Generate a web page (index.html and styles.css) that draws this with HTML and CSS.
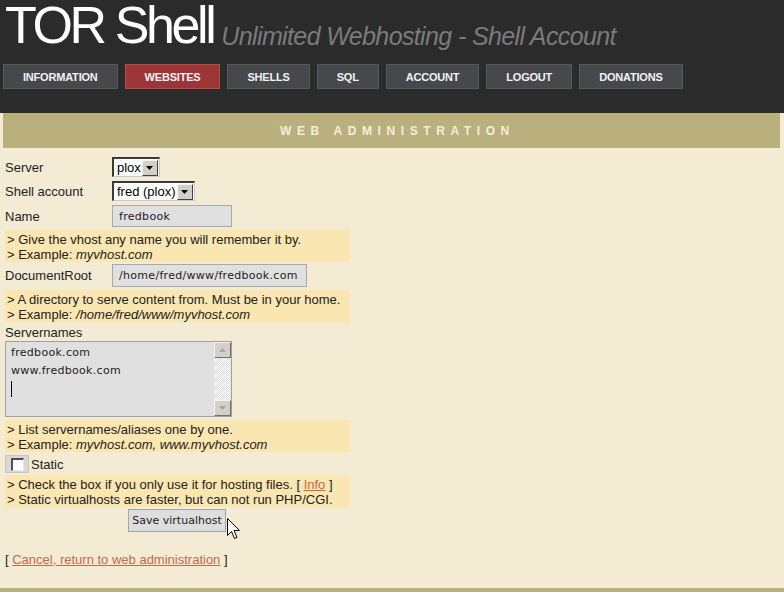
FILE: index.html
```html
<!DOCTYPE html>
<html>
<head>
<meta charset="utf-8">
<title>TOR Shell - Web Administration</title>
<link rel="stylesheet" href="styles.css">
</head>
<body>
<div class="header">
  <div class="brand"><span class="logo">TOR Shell</span><span class="tagline">Unlimited Webhosting - Shell Account</span></div>
  <nav class="nav">
    <a class="navbtn" href="#">INFORMATION</a>
    <a class="navbtn active" href="#">WEBSITES</a>
    <a class="navbtn" href="#">SHELLS</a>
    <a class="navbtn" href="#">SQL</a>
    <a class="navbtn" href="#">ACCOUNT</a>
    <a class="navbtn" href="#">LOGOUT</a>
    <a class="navbtn" href="#">DONATIONS</a>
  </nav>
</div>
<div class="page">
  <div class="titlebar">WEB ADMINISTRATION</div>
  <div class="content">
    <div class="row r-server">
      <span class="label">Server</span>
      <span class="select"><span class="sel-text">plox</span><span class="sel-btn"><svg width="7" height="4" viewBox="0 0 7 4"><path d="M0 0H7L3.5 4Z" fill="#000"/></svg></span></span>
    </div>
    <div class="row r-shell">
      <span class="label">Shell account</span>
      <span class="select"><span class="sel-text">fred (plox)</span><span class="sel-btn"><svg width="7" height="4" viewBox="0 0 7 4"><path d="M0 0H7L3.5 4Z" fill="#000"/></svg></span></span>
    </div>
    <div class="row r-name">
      <span class="label">Name</span>
      <span class="input in-name">fredbook</span>
    </div>
    <div class="help help-a">&gt; Give the vhost any name you will remember it by.<br>&gt; Example: <i>myvhost.com</i></div>
    <div class="row r-doc">
      <span class="label">DocumentRoot</span>
      <span class="input in-doc">/home/fred/www/fredbook.com</span>
    </div>
    <div class="help help-a">&gt; A directory to serve content from. Must be in your home.<br>&gt; Example: <i>/home/fred/www/myvhost.com</i></div>
    <div class="sn-label">Servernames</div>
    <div class="textarea">
      <div class="ta-text">fredbook.com<br>www.fredbook.com<br><span class="caret"></span></div>
      <div class="scrollbar">
        <span class="sb-btn"><svg width="7" height="4" viewBox="0 0 7 4"><path d="M0 4H7L3.5 0Z" fill="#a6a6a6"/></svg></span>
        <span class="sb-track"></span>
        <span class="sb-btn"><svg width="7" height="4" viewBox="0 0 7 4"><path d="M0 0H7L3.5 4Z" fill="#a6a6a6"/></svg></span>
      </div>
    </div>
    <div class="help help-b">&gt; List servernames/aliases one by one.<br>&gt; Example: <i>myvhost.com, www.myvhost.com</i></div>
    <div class="row r-static">
      <span class="cbwrap"><span class="cb"></span></span>
      <span class="static-label">Static</span>
    </div>
    <div class="help help-a">&gt; Check the box if you only use it for hosting files. [ <a class="link" href="#">Info</a> ]<br>&gt; Static virtualhosts are faster, but can not run PHP/CGI.</div>
    <div class="saverow">
      <span class="savebtn">Save virtualhost</span>
      <svg class="cursor" width="13" height="22" viewBox="0 0 13 22"><path d="M0.5 0.5V17.5L4.5 13.5L7.5 20.5L10 19.5L7 12.5H12.5Z" fill="#fff" stroke="#000" stroke-width="1" stroke-linejoin="miter"/></svg>
    </div>
    <div class="cancel">[ <a class="link" href="#">Cancel, return to web administration</a> ]</div>
  </div>
</div>
</body>
</html>
```

FILE: styles.css
```css
* { box-sizing: border-box; }
body {
  margin: 0;
  background: #ffffff;
  font-family: "Liberation Sans", Arial, sans-serif;
}
.header {
  background: #2b2b2b;
  height: 113px;
  padding-left: 3px;
}
.brand {
  height: 50px;
  line-height: 50px;
  white-space: nowrap;
  padding-left: 2px;
}
.logo {
  font-size: 52px;
  letter-spacing: -3.4px;
  color: #ffffff;
}
.tagline {
  font-size: 25px;
  font-style: italic;
  color: #7b7b7b;
  letter-spacing: -0.62px;
  margin-left: 8px;
  vertical-align: -2px;
}
.nav {
  display: flex;
  gap: 7px;
  margin-top: 14px;
}
.navbtn {
  height: 25px;
  padding: 0 19px;
  display: flex;
  align-items: center;
  background: #46484c;
  border: 1px solid #56585c;
  color: #f2f2f2;
  font-size: 11px;
  font-weight: bold;
  letter-spacing: -0.2px;
  text-decoration: none;
}
.navbtn.active {
  background: #9c3535;
  border-color: #b84a4a;
}
.page {
  background: #f3ebd4;
  border-bottom: 4px solid #bab07e;
}
.titlebar {
  margin: 0 4px 0 3px;
  height: 35px;
  background: #bab07e;
  color: #f4eedc;
  font-size: 12px;
  font-weight: bold;
  letter-spacing: 5.6px;
  display: flex;
  align-items: center;
  justify-content: center;
  padding-left: 12px;
}
.content {
  padding: 9px 0 20px 5px;
  font-size: 13px;
  color: #222222;
}
.row {
  display: flex;
  align-items: center;
}
.label {
  width: 107px;
  flex: none;
}
.r-server { height: 20px; margin-bottom: 4px; }
.r-shell { height: 20px; margin-bottom: 4px; }
.r-name { height: 22px; margin-bottom: 3px; }
.r-doc { height: 23px; margin-bottom: 3px; }
.select {
  display: flex;
  align-items: center;
  height: 20px;
  background: #ffffff;
  border-style: solid;
  border-width: 2px 1px 1px 2px;
  border-color: #3a3a3a #c8c8c8 #c8c8c8 #3a3a3a;
  color: #000000;
}
.sel-text {
  padding: 0 1px 0 3px;
}
.sel-btn {
  width: 16px;
  height: 16px;
  display: flex;
  align-items: center;
  justify-content: center;
  background: #d4d0c8;
  border-style: solid;
  border-width: 1px;
  border-color: #f4f4f4 #404040 #404040 #f4f4f4;
  margin-right: 1px;
}
.input {
  height: 100%;
  display: flex;
  align-items: center;
  border: 1px solid #a9a9a9;
  background: #e0e0e0;
  font-family: "DejaVu Sans", Verdana, sans-serif;
  font-size: 11px;
  letter-spacing: 0.3px;
  padding-left: 6px;
  color: #222222;
}
.in-name { width: 120px; }
.in-doc { width: 195px; }
.help {
  width: 345px;
  height: 32px;
  background: #f9e6b0;
  padding: 2px 2px 0;
  line-height: 15px;
}
.help-a { margin-bottom: 2px; }
.help-b { margin-bottom: 3px; }
.sn-label {
  height: 16px;
  line-height: 17px;
  margin-bottom: 1px;
}
.textarea {
  width: 227px;
  height: 76px;
  display: flex;
  border: 1px solid #a0a0a0;
  background: #e0e0e0;
  margin-bottom: 3px;
}
.ta-text {
  flex: 1;
  padding: 2px 0 0 5px;
  font-family: "DejaVu Sans", Verdana, sans-serif;
  font-size: 11px;
  letter-spacing: 0.3px;
  line-height: 18px;
  color: #222222;
}
.caret {
  display: inline-block;
  width: 1px;
  height: 16px;
  background: #000000;
  vertical-align: -5px;
}
.scrollbar {
  width: 17px;
  display: flex;
  flex-direction: column;
  background: repeating-conic-gradient(#ffffff 0 25%, #dcdcdc 0 50%) 0 0 / 2px 2px;
}
.sb-btn {
  height: 16px;
  display: flex;
  align-items: center;
  justify-content: center;
  background: #d4d0c8;
  border-style: solid;
  border-width: 1px;
  border-color: #f4f4f4 #707070 #707070 #f4f4f4;
}
.sb-track { flex: 1; }
.r-static { height: 18px; margin-bottom: 2px; }
.cbwrap {
  width: 24px;
  height: 18px;
  display: flex;
  align-items: center;
  justify-content: center;
  background: #d8d8d6;
  border: 1px solid #c4c4c4;
}
.cb {
  width: 13px;
  height: 13px;
  background: #ffffff;
  border-style: solid;
  border-width: 2px 1px 1px 2px;
  border-color: #505050 #e8e8e8 #e8e8e8 #505050;
}
.static-label { margin-left: 2px; }
.saverow {
  position: relative;
  height: 23px;
}
.savebtn {
  margin-left: 123px;
  width: 98px;
  height: 23px;
  display: flex;
  align-items: center;
  justify-content: center;
  background: #dedede;
  border: 1px solid #a3a3a3;
  font-family: "DejaVu Sans", Verdana, sans-serif;
  font-size: 11px;
  color: #222222;
}
.cursor {
  position: absolute;
  left: 222px;
  top: 9px;
}
.cancel {
  margin-top: 20px;
  line-height: 16px;
}
.link {
  color: #c4694c;
  text-decoration: underline;
}
```
